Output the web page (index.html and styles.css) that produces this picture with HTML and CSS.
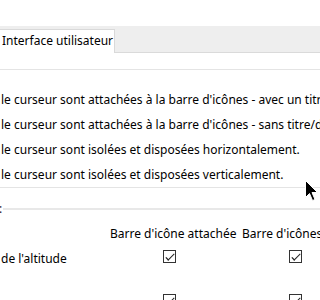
FILE: index.html
```html
<!DOCTYPE html>
<html lang="fr">
<head>
    <meta charset="UTF-8">
    <title>Options</title>
    <link rel="stylesheet" href="styles.css">
</head>
<body>
    <div class="window">
        <div class="tabs">
            <div class="tab">Interface utilisateur</div>
        </div>

        <div class="page">
            <div class="options">
                <div class="opt">le curseur sont attachées à la barre d'icônes - avec un titre/description</div>
                <div class="opt">le curseur sont attachées à la barre d'icônes - sans titre/description</div>
                <div class="opt">le curseur sont isolées et disposées horizontalement.</div>
                <div class="opt">le curseur sont isolées et disposées verticalement.</div>
            </div>

            <div class="section-title"><span>:</span></div>

            <div class="grid">
                <div></div>
                <div class="head">Barre d'icône attachée</div>
                <div class="head">Barre d'icônes flottante</div>

                <div class="label">de l'altitude</div>
                <div class="cell"><span class="check first"></span></div>
                <div class="cell"><span class="check"></span></div>

                <div class="label"></div>
                <div class="cell"><span class="check first"></span></div>
                <div class="cell"><span class="check"></span></div>
            </div>
        </div>

        <svg class="cursor" width="14" height="24" viewBox="0 0 14 24">
            <path d="M0.5 0.5 L0.5 17.5 L4.5 13.5 L7.5 20.5 L10 19.5 L7 12.5 L12.5 12.5 Z" fill="#000" stroke="#fff" stroke-width="1"/>
        </svg>
    </div>
</body>
</html>
```

FILE: styles.css
```css
* {
    margin: 0;
    padding: 0;
    box-sizing: border-box;
}

body {
    font-family: "Noto Sans", "Open Sans", sans-serif;
    font-size: 12px;
    color: #000;
    background: #fff;
    width: 320px;
    height: 300px;
    overflow: hidden;
}

.window {
    position: relative;
    padding-top: 26px;
    height: 300px;
    overflow: hidden;
}

.tabs {
    height: 27px;
    background: #eeeeee;
    border-bottom: 1px solid #dadada;
    display: flex;
    align-items: flex-end;
}

.tab {
    width: 115px;
    height: 24px;
    margin-bottom: -1px;
    background: #fff;
    border: 1px solid #d9d9d9;
    border-left: none;
    border-bottom: none;
    padding-left: 2px;
    line-height: 22px;
    white-space: nowrap;
}

.page {
    padding-top: 16px;
}

.options {
    border-top: 1px solid #e4e4e4;
    border-bottom: 1px solid #e4e4e4;
    padding-top: 17px;
}

.opt {
    height: 25px;
    line-height: 25px;
    padding-left: 1px;
    white-space: nowrap;
    overflow: hidden;
}

.section-title {
    display: flex;
    align-items: center;
    height: 14px;
    margin-top: 14px;
    line-height: 14px;
}

.section-title span {
    margin-left: -1px;
    color: #223;
}

.section-title::after {
    content: "";
    flex: 1;
    height: 2px;
    margin-left: 1px;
    background: #e8e8e8;
}

.grid {
    display: grid;
    grid-template-columns: 110px 132px 1fr;
    grid-template-rows: 18px 44px 44px;
    margin-top: 9px;
    white-space: nowrap;
}

.grid .head {
    height: 18px;
    line-height: 18px;
}

.label {
    padding-left: 1px;
    line-height: 20px;
    padding-top: 6px;
}

.cell {
    padding-top: 7px;
}

.check {
    display: block;
    width: 13px;
    height: 13px;
    border: 1px solid #333;
    margin-left: 47px;
    position: relative;
}

.check.first {
    margin-left: 53px;
}

.check::after {
    content: "";
    position: absolute;
    left: 2px;
    top: 1px;
    width: 6px;
    height: 3px;
    border-left: 1.2px solid #222;
    border-bottom: 1.2px solid #222;
    transform: translate(0.5px, 2px) rotate(-45deg) scaleX(1.3);
}

.cursor {
    position: absolute;
    left: 305px;
    top: 180px;
}
```
